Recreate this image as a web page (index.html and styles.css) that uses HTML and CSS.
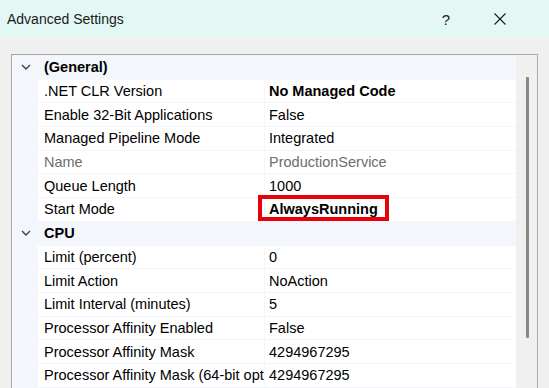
FILE: index.html
```html
<!DOCTYPE html>
<html>
<head>
<meta charset="utf-8">
<link rel="stylesheet" href="styles.css">
</head>
<body>
<div class="titlebar">
  <span class="title">Advanced Settings</span>
  <span class="help">?</span>
  <svg class="close" width="12" height="12" viewBox="0 0 12 12"><path d="M0.5 0.5 L11.5 11.5 M11.5 0.5 L0.5 11.5" stroke="#1a1a1a" stroke-width="1.1" fill="none"/></svg>
</div>
<div class="content">
  <div class="box">
    <div class="list">
      <div class="row cat"><span class="gut"><svg width="10" height="6" viewBox="0 0 10 6"><path d="M1 1 L5 5 L9 1" stroke="#404040" stroke-width="1.4" fill="none"/></svg></span><span class="catname">(General)</span></div>
      <div class="row"><span class="gut"></span><span class="name">.NET CLR Version</span><span class="val bold">No Managed Code</span></div>
      <div class="row"><span class="gut"></span><span class="name">Enable 32-Bit Applications</span><span class="val">False</span></div>
      <div class="row"><span class="gut"></span><span class="name">Managed Pipeline Mode</span><span class="val">Integrated</span></div>
      <div class="row dis"><span class="gut"></span><span class="name">Name</span><span class="val">ProductionService</span></div>
      <div class="row"><span class="gut"></span><span class="name">Queue Length</span><span class="val">1000</span></div>
      <div class="row"><span class="gut"></span><span class="name">Start Mode</span><span class="val bold"><span class="hl">AlwaysRunning</span></span></div>
      <div class="row cat"><span class="gut"><svg width="10" height="6" viewBox="0 0 10 6"><path d="M1 1 L5 5 L9 1" stroke="#404040" stroke-width="1.4" fill="none"/></svg></span><span class="catname">CPU</span></div>
      <div class="row"><span class="gut"></span><span class="name">Limit (percent)</span><span class="val">0</span></div>
      <div class="row"><span class="gut"></span><span class="name">Limit Action</span><span class="val">NoAction</span></div>
      <div class="row"><span class="gut"></span><span class="name">Limit Interval (minutes)</span><span class="val">5</span></div>
      <div class="row"><span class="gut"></span><span class="name">Processor Affinity Enabled</span><span class="val">False</span></div>
      <div class="row"><span class="gut"></span><span class="name">Processor Affinity Mask</span><span class="val">4294967295</span></div>
      <div class="row"><span class="gut"></span><span class="name"><span class="clip">Processor Affinity Mask (64-bit option)</span></span><span class="val">4294967295</span></div>
    </div>
    <div class="scroll"><div class="thumb"></div></div>
  </div>
</div>
</body>
</html>
```

FILE: styles.css
```css
html, body {
  margin: 0;
  padding: 0;
  height: 100%;
  overflow: hidden;
  background: #f0f0f0;
  font-family: "Liberation Sans", Arial, sans-serif;
  color: #000;
}
.titlebar {
  height: 38px;
  background: #e3f7f5;
  display: flex;
  align-items: center;
  padding-left: 7px;
  box-sizing: border-box;
}
.title {
  font-size: 14px;
  color: #1a1a1a;
  flex: 1;
}
.help {
  font-size: 15px;
  color: #1a1a1a;
  margin-right: 44px;
}
.close {
  margin-right: 43px;
}
.content {
  padding: 16px 11px 0 11px;
}
.box {
  border: 1px solid #a8a8a8;
  border-bottom: none;
  display: flex;
  height: 400px;
}
.list {
  width: 504px;
  padding-top: 1px;
  display: flex;
  flex-direction: column;
  gap: 1px;
  background: #f3f6fb;
}
.row {
  display: flex;
  height: 22.7px;
  flex-shrink: 0;
  font-size: 14.5px;
  align-items: stretch;
}
.gut {
  width: 26px;
  background: #f3f6fb;
  display: flex;
  align-items: center;
  justify-content: center;
  padding-left: 2px;
  box-sizing: border-box;
}
.name {
  width: 226px;
  flex-shrink: 0;
  background: #fff;
  padding-left: 6px;
  box-sizing: border-box;
  white-space: nowrap;
  overflow: hidden;
  display: flex;
  align-items: center;
  margin-right: 1px;
}
.clip {
  display: block;
  overflow: hidden;
  width: 220px;
}
.val {
  flex: 1;
  background: #fff;
  padding-left: 4px;
  display: flex;
  align-items: center;
  white-space: nowrap;
  position: relative;
}
.bold { font-weight: bold; }
.cat .catname {
  padding-left: 6px;
  font-weight: bold;
  display: flex;
  align-items: center;
}
.dis { color: #6d6d6d; }
.hl {
  position: relative;
}
.hl::after {
  content: "";
  position: absolute;
  left: -11px;
  top: -6px;
  width: 123px;
  height: 18px;
  border: 4px solid #e8000b;
}
.scroll {
  width: 21px;
  background: #f0f0f0;
  position: relative;
}
.thumb {
  position: absolute;
  left: 10px;
  top: 22px;
  width: 3px;
  height: 261px;
  background: #888;
  border-radius: 1px;
}
```
